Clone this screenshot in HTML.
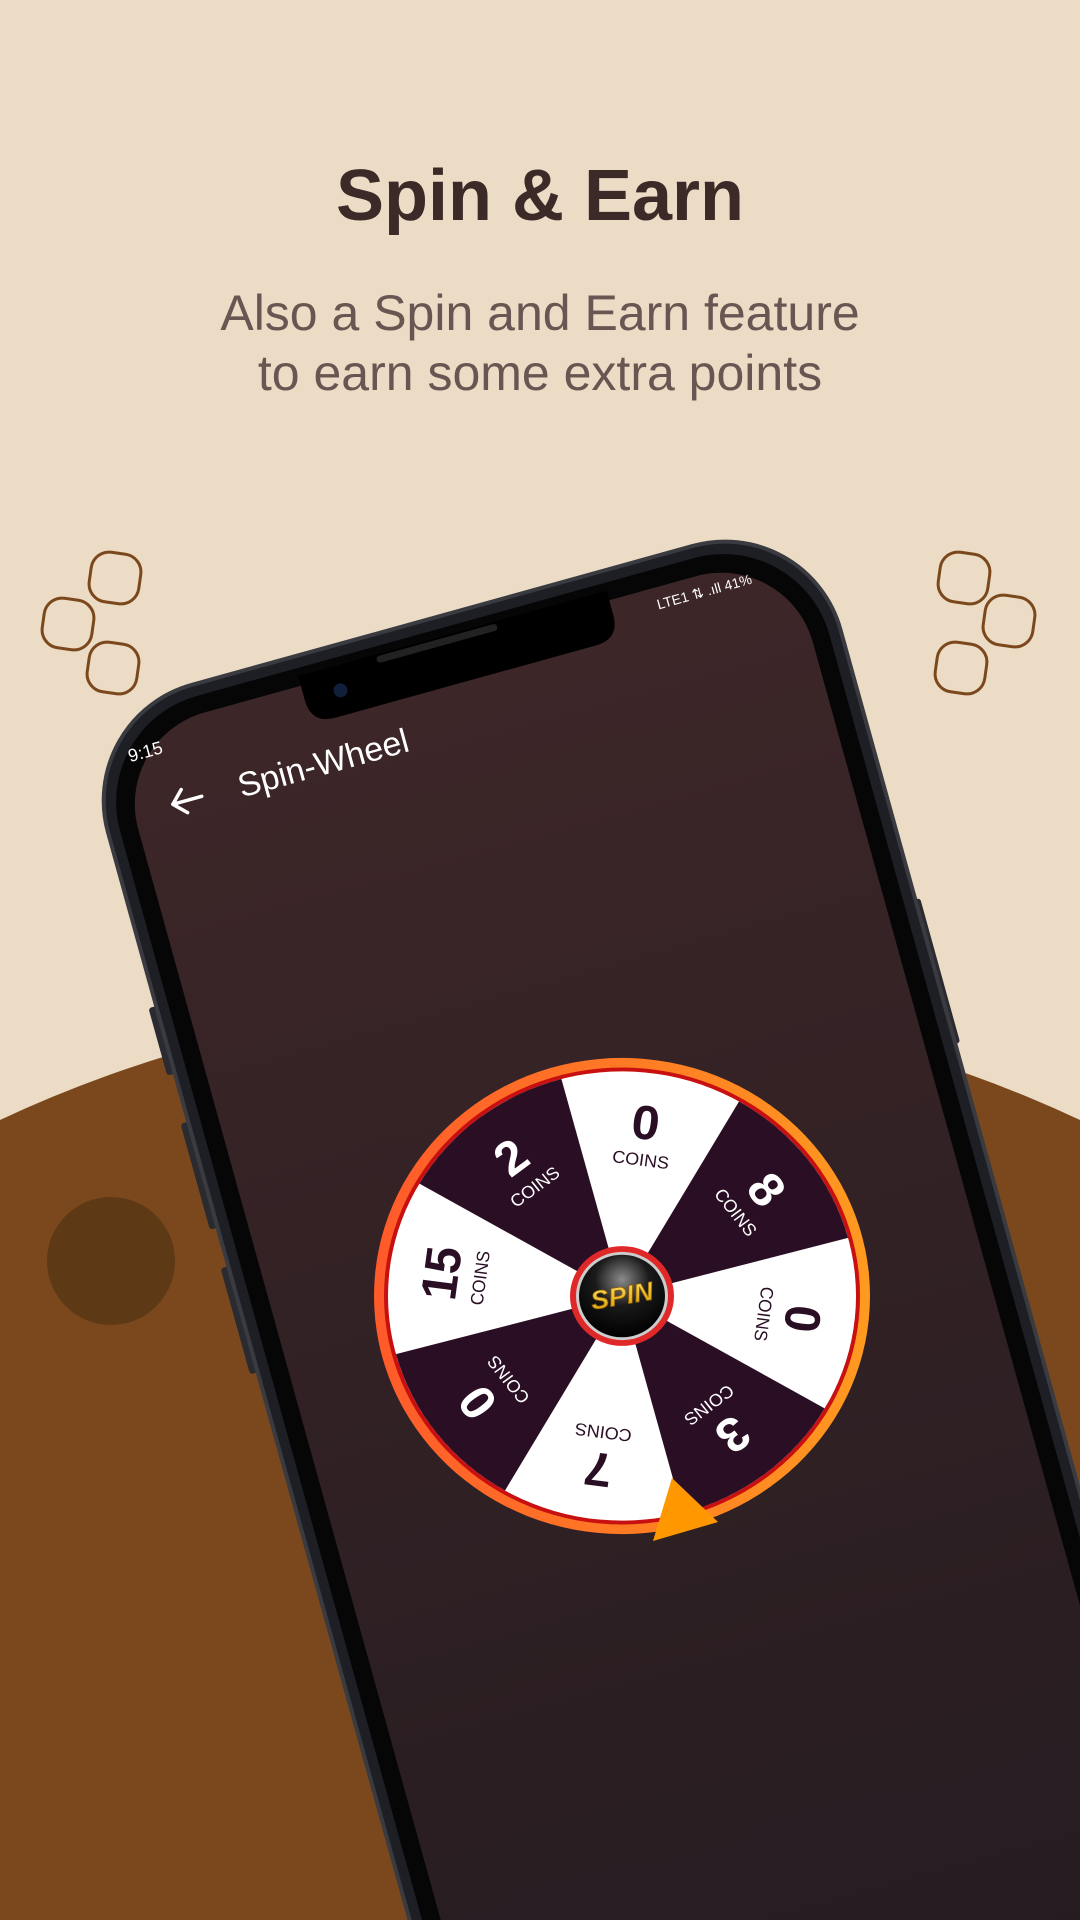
<!DOCTYPE html>
<html><head><meta charset="utf-8"><style>
html,body{margin:0;padding:0;width:1080px;height:1920px;overflow:hidden;}
body{background:#ecdcc5;font-family:"Liberation Sans",sans-serif;}
svg{display:block;overflow:hidden;}
</style></head><body>
<svg width="1080" height="1920" viewBox="0 0 1080 1920" xmlns="http://www.w3.org/2000/svg">
<defs>
<linearGradient id="scr" x1="0" y1="0" x2="0" y2="1">
<stop offset="0" stop-color="#3d2628"/><stop offset="0.5" stop-color="#2a1e22"/><stop offset="1" stop-color="#17171f"/>
</linearGradient>
<linearGradient id="ring" x1="0" y1="0" x2="1" y2="0">
<stop offset="0" stop-color="#ff5a2a"/><stop offset="1" stop-color="#ff9a20"/>
</linearGradient>
<radialGradient id="btn" cx="0.5" cy="0.3" r="0.7">
<stop offset="0" stop-color="#8a8a8a"/><stop offset="0.45" stop-color="#1a1a1a"/><stop offset="1" stop-color="#000"/>
</radialGradient>
<linearGradient id="spinTxt" x1="0" y1="0" x2="0" y2="1">
<stop offset="0" stop-color="#ffe066"/><stop offset="1" stop-color="#d79a00"/>
</linearGradient>
<clipPath id="pg"><rect width="1080" height="1920"/></clipPath>
</defs>
<g clip-path="url(#pg)">
<rect width="1080" height="1920" fill="#ecdcc5"/>
<circle cx="540" cy="2275" r="1275" fill="#7a481c"/>
<circle cx="111" cy="1261" r="64" fill="#5e3915"/>
<g fill="none" stroke="#7a481c" stroke-width="3">
<rect x="90" y="553" width="50" height="50" rx="18" transform="rotate(8 115 578)"/>
<rect x="43" y="599" width="50" height="50" rx="18" transform="rotate(8 68 624)"/>
<rect x="88" y="643" width="50" height="50" rx="18" transform="rotate(8 113 668)"/>
<rect x="939" y="553" width="50" height="50" rx="18" transform="rotate(8 964 578)"/>
<rect x="984" y="596" width="50" height="50" rx="18" transform="rotate(8 1009 621)"/>
<rect x="936" y="643" width="50" height="50" rx="18" transform="rotate(8 961 668)"/>
</g>
<text x="540" y="220" text-anchor="middle" font-size="72" font-weight="bold" fill="#3c2a28">Spin &amp; Earn</text>
<text x="540" y="330" text-anchor="middle" font-size="50" fill="#6b5553">Also a Spin and Earn feature</text>
<text x="540" y="390" text-anchor="middle" font-size="50" fill="#6b5553">to earn some extra points</text>

<g transform="translate(76,717) rotate(-15.5)">
<rect x="-8" y="300" width="10" height="70" rx="3" fill="#2a2b30"/>
<rect x="-8" y="420" width="10" height="110" rx="3" fill="#2a2b30"/>
<rect x="-8" y="570" width="10" height="110" rx="3" fill="#2a2b30"/>
<rect x="755" y="400" width="10" height="150" rx="3" fill="#2a2b30"/>
<rect x="0" y="0" width="760" height="2300" rx="120" fill="#1e1f24" stroke="#3a3b41" stroke-width="4"/>
<rect x="12" y="12" width="736" height="2276" rx="110" fill="#060607"/>
<rect x="30" y="30" width="700" height="2240" rx="95" fill="url(#scr)"/>
<path d="M225 20 H545 V45 Q545 70 520 70 H250 Q225 70 225 45 Z" fill="#000"/>
<rect x="305" y="22" width="125" height="7" rx="3.5" fill="#222"/>
<circle cx="262" cy="45" r="7" fill="#10203a"/>
<text x="40" y="58" font-size="18" fill="#fff">9:15</text>
<text x="590" y="52" font-size="14" fill="#fff">LTE1 ⇅ .ıll 41%</text>
<path d="M70 110 H100 M70 110 L82 98 M70 110 L82 122" stroke="#fff" stroke-width="3.5" fill="none" stroke-linecap="round"/>
<text x="138" y="122" font-size="34" fill="#fff">Spin-Wheel</text>
</g>

<g transform="translate(622,1296) scale(1,0.96)">
<circle r="248" fill="url(#ring)"/>
<circle r="238" fill="#c81010"/>
<circle r="234" fill="#fff"/>
<g fill="#2a0f24">
<path d="M0 0 L117 -202.6 A234 234 0 0 1 226 -60.6 Z"/>
<path d="M0 0 L117 -202.6 A234 234 0 0 1 226 -60.6 Z" transform="rotate(90)"/>
<path d="M0 0 L117 -202.6 A234 234 0 0 1 226 -60.6 Z" transform="rotate(180)"/>
<path d="M0 0 L117 -202.6 A234 234 0 0 1 226 -60.6 Z" transform="rotate(270)"/>
</g>
<g font-family="'Liberation Sans Narrow','Liberation Sans',sans-serif" text-anchor="middle">
<g transform="rotate(7.5)"><text y="-165" font-size="50" font-weight="bold" fill="#2a0f24">0</text><text y="-137" font-size="18" fill="#2a0f24">COINS</text></g>
<g transform="rotate(52.5)"><text y="-165" font-size="50" font-weight="bold" fill="#fff">8</text><text y="-137" font-size="18" fill="#fff">COINS</text></g>
<g transform="rotate(97.5)"><text y="-165" font-size="50" font-weight="bold" fill="#2a0f24">0</text><text y="-137" font-size="18" fill="#2a0f24">COINS</text></g>
<g transform="rotate(142.5)"><text y="-165" font-size="50" font-weight="bold" fill="#fff">3</text><text y="-137" font-size="18" fill="#fff">COINS</text></g>
<g transform="rotate(187.5)"><text y="-165" font-size="50" font-weight="bold" fill="#2a0f24">7</text><text y="-137" font-size="18" fill="#2a0f24">COINS</text></g>
<g transform="rotate(232.5)"><text y="-165" font-size="50" font-weight="bold" fill="#fff">0</text><text y="-137" font-size="18" fill="#fff">COINS</text></g>
<g transform="rotate(277.5)"><text y="-165" font-size="50" font-weight="bold" fill="#2a0f24">15</text><text y="-137" font-size="18" fill="#2a0f24">COINS</text></g>
<g transform="rotate(322.5)"><text y="-165" font-size="50" font-weight="bold" fill="#fff">2</text><text y="-137" font-size="18" fill="#fff">COINS</text></g>
</g>
<circle r="52" fill="#e02828"/>
<circle r="46" fill="#ccc"/>
<circle r="43" fill="url(#btn)"/>
<text x="0" y="9" text-anchor="middle" font-size="27" font-weight="bold" font-style="italic" fill="url(#spinTxt)" stroke="#8a5a00" stroke-width="0.8" transform="rotate(-10)">SPIN</text>
</g>
<path d="M672 1478 L718 1522 L653 1541 Z" fill="#ff9800"/>
</g>
</svg>
</body></html>
